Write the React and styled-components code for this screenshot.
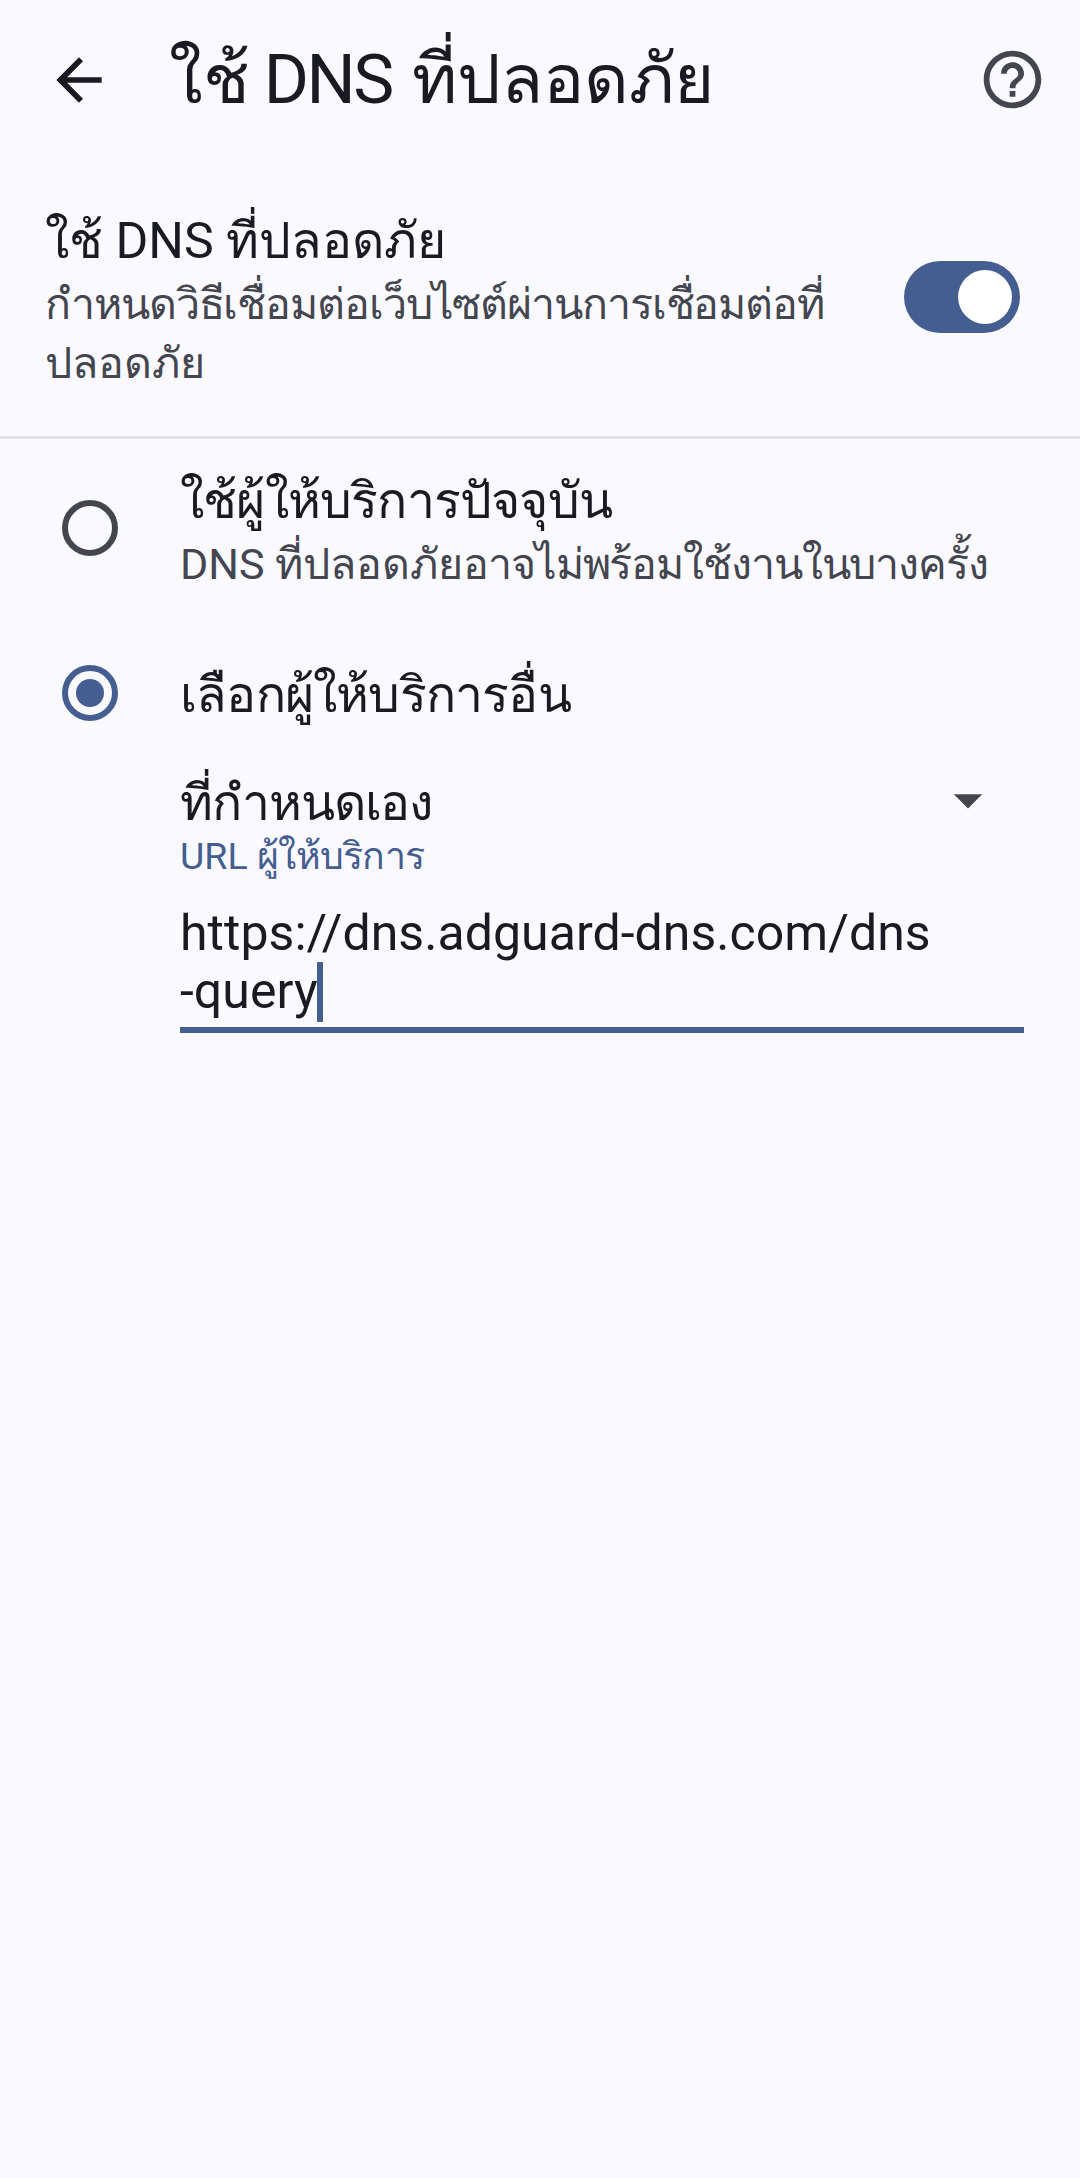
import { useState } from "react";
import styled, { createGlobalStyle } from "styled-components";
import { MdArrowBack, MdArrowDropDown, MdHelpOutline } from "react-icons/md";

const providers = [
  {
    id: "current",
    title: "ใช้ผู้ให้บริการปัจจุบัน",
    summary: (
      <>
        DNS ที่ปลอดภัย<Tight>อาจไม่พร้อมใช้งานในบางครั้ง</Tight>
      </>
    ),
  },
  {
    id: "other",
    title: "เลือกผู้ให้บริการอื่น",
  },
];

export default function App() {
  const [enabled, setEnabled] = useState(true);
  const [selected, setSelected] = useState("other");

  return (
    <Page>
      <GlobalStyle />
      <Toolbar>
        <IconButton aria-label="back">
          <MdArrowBack fontSize={68} />
        </IconButton>
        <Heading>
          ใช้ <Latin>DNS</Latin> ที่ปลอดภัย
        </Heading>
        <IconButton aria-label="help" $muted>
          <MdHelpOutline fontSize={69} />
        </IconButton>
      </Toolbar>

      <SwitchRow>
        <SwitchText>
          <Title>ใช้ DNS ที่ปลอดภัย</Title>
          <Summary>
            <Tight>กำหนดวิธีเชื่อมต่อเว็บไซต์ผ่านการเชื่อมต่อที่</Tight>
            <br />
            ปลอดภัย
          </Summary>
        </SwitchText>
        <Switch $on={enabled} onClick={() => setEnabled(!enabled)}>
          <Thumb />
        </Switch>
      </SwitchRow>

      {providers.map((each) => (
        <RadioRow
          key={each.id}
          $single={!each.summary}
          onClick={() => setSelected(each.id)}
        >
          <Radio $checked={selected === each.id}>
            {selected === each.id && <Dot />}
          </Radio>
          <div>
            <Title $spacing="-0.8px">{each.title}</Title>
            {each.summary && <Summary>{each.summary}</Summary>}
          </div>
        </RadioRow>
      ))}

      <Form>
        <Dropdown>
          <Title $spacing="-1.1px">ที่กำหนดเอง</Title>
          <MdArrowDropDown fontSize={68} />
        </Dropdown>
        <Label>
          URL <Tight $small>ผู้ให้บริการ</Tight>
        </Label>
        <Field>
          https://dns.adguard-dns.com/dns
          <br />
          -query
          <Caret />
        </Field>
      </Form>
    </Page>
  );
}

const GlobalStyle = createGlobalStyle`
  body {
    margin: 0;
    background-color: #faf9ff;
  }
`;

const Page = styled.div`
  min-height: 2178px;
  background-color: #faf9ff;
  color: #1a1b20;
  font-family: Roboto, sans-serif;
`;

const Toolbar = styled.header`
  display: flex;
  align-items: center;
  height: 159px;
  padding: 0 33px 0 45px;
`;

const IconButton = styled.button`
  display: flex;
  padding: 0;
  border: none;
  background-color: transparent;
  color: ${(props) => (props.$muted ? "#44464f" : "#1a1b20")};
`;

const Heading = styled.h1`
  flex-grow: 1;
  margin: 0 0 0 56px;
  font-size: 69px;
  line-height: 80px;
  font-weight: 400;
  white-space: nowrap;
`;

const Latin = styled.span`
  margin: 0 3px 0 -3.5px;
  letter-spacing: -2.5px;
`;

const SwitchRow = styled.section`
  display: flex;
  align-items: center;
  justify-content: space-between;
  height: 277px;
  padding: 0 60px 0 45px;
  border-bottom: 3px solid #e2e2ec;
`;

const SwitchText = styled.div`
  padding-top: 9px;
`;

const Title = styled.div`
  font-size: 50px;
  line-height: 60px;
  letter-spacing: ${(props) => props.$spacing || "normal"};
  white-space: nowrap;
`;

const Summary = styled.div`
  margin-top: 4px;
  color: #44464f;
  font-size: 43px;
  line-height: 59px;
  white-space: nowrap;
`;

// function declaration so it can be used in the providers list above
function Tight({ $small, children }) {
  return <TightText $small={$small}>{children}</TightText>;
}

const TightText = styled.span`
  letter-spacing: ${(props) => (props.$small ? "-0.7px" : "-1.1px")};
`;

const Switch = styled.div`
  display: flex;
  align-items: center;
  justify-content: ${(props) => (props.$on ? "flex-end" : "flex-start")};
  box-sizing: border-box;
  width: 116px;
  height: 72px;
  margin-bottom: 1px;
  padding: 0 8px;
  border-radius: 36px;
  background-color: ${(props) => (props.$on ? "#455e91" : "#74777f")};
`;

const Thumb = styled.div`
  width: 54px;
  height: 54px;
  border-radius: 50%;
  background-color: #fff;
`;

const RadioRow = styled.div`
  display: flex;
  align-items: center;
  gap: 62px;
  box-sizing: border-box;
  height: ${(props) => (props.$single ? "152px" : "178px")};
  padding-left: 62px;

  > div:last-child {
    padding-top: ${(props) => (props.$single ? "4px" : "8px")};
  }
`;

const Radio = styled.div`
  display: flex;
  align-items: center;
  justify-content: center;
  box-sizing: border-box;
  width: 56px;
  height: 56px;
  border: 6px solid ${(props) => (props.$checked ? "#455e91" : "#44464f")};
  border-radius: 50%;
`;

const Dot = styled.div`
  width: 28px;
  height: 28px;
  border-radius: 50%;
  background-color: #455e91;
`;

const Form = styled.section`
  padding: 4px 56px 0 180px;
`;

const Dropdown = styled.div`
  display: flex;
  align-items: flex-start;
  justify-content: space-between;
  height: 61px;
  padding-right: 22px;

  svg {
    margin-top: -7px;
    color: #44464f;
  }
`;

const Label = styled.div`
  color: #455e91;
  font-size: 37.5px;
  line-height: 44px;
`;

const Field = styled.div`
  margin-top: 26px;
  padding-bottom: 7px;
  border-bottom: 6px solid #455e91;
  font-size: 50px;
  line-height: 58px;
  letter-spacing: 0.05px;
`;

const Caret = styled.span`
  display: inline-block;
  width: 6px;
  height: 60px;
  margin: -10px 0 -8px -1px;
  vertical-align: -6px;
  background-color: #455e91;
`;
